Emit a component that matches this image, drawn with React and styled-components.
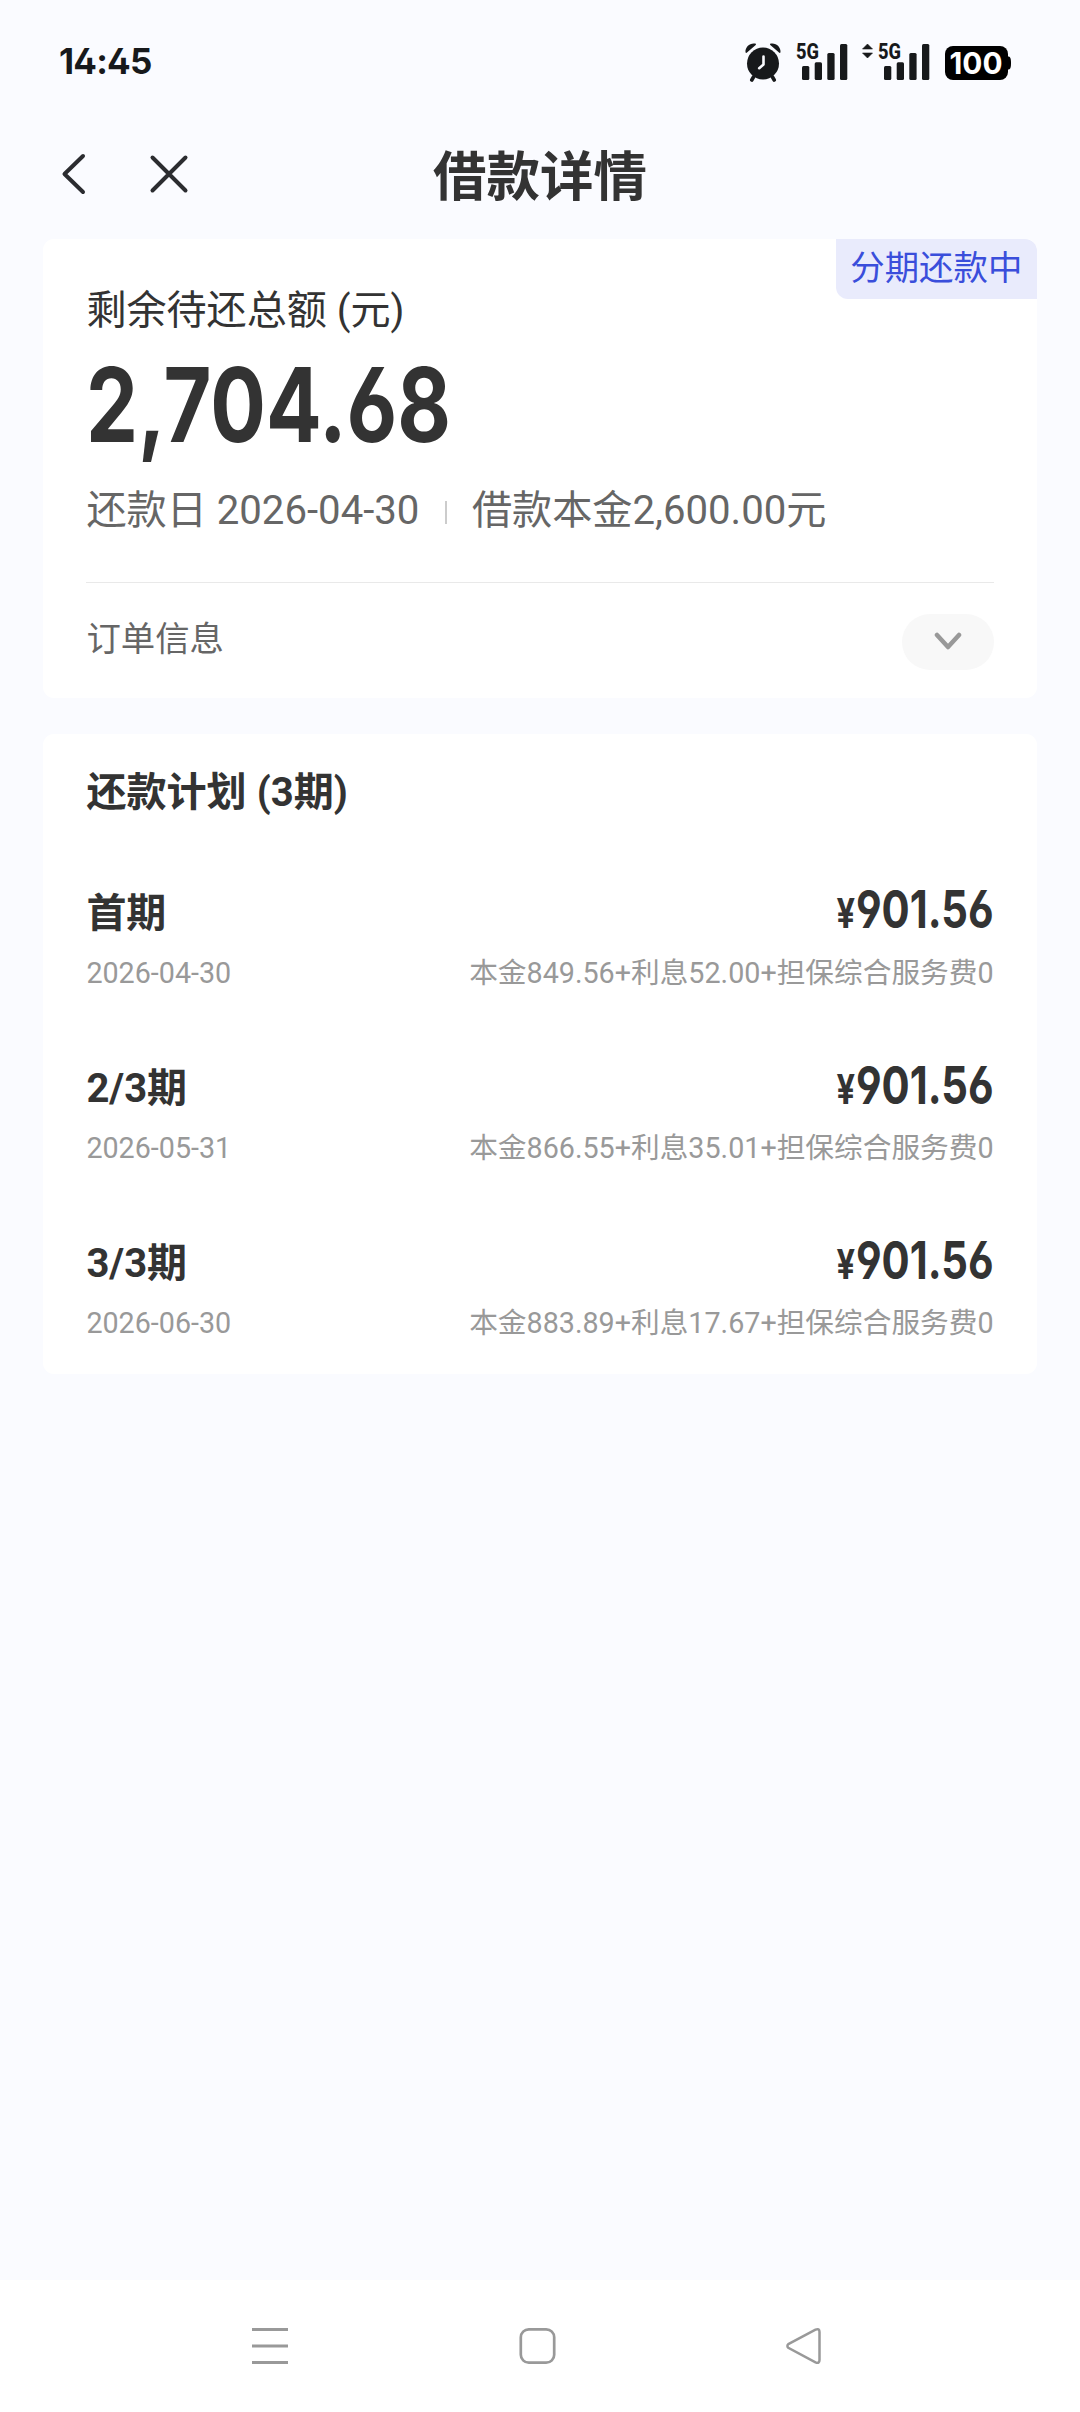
import styled, { createGlobalStyle } from 'styled-components'

const GlobalStyle = createGlobalStyle`
  * {
    box-sizing: border-box;
  }
  body {
    margin: 0;
    background-color: #fafbff;
    font-family: Roboto, 'Noto Sans CJK SC', sans-serif;
    color: #333;
  }
`

const Screen = styled.div`
  display: flex;
  flex-direction: column;
  width: 1080px;
  height: 2412px;
`

const StatusBar = styled.div`
  display: flex;
  align-items: flex-start;
  height: 110px;
  padding: 41px 68px 0 59px;
  color: #17191b;
`

const Clock = styled.div`
  flex: 1;
  font-family: Inter, sans-serif;
  font-feature-settings: 'cv02';
  font-size: 35px;
  font-weight: 650;
  line-height: 41px;
  letter-spacing: -0.8px;
`

const StatusIcons = styled.div`
  display: flex;
  gap: 14px;
  padding-top: 1px;

  svg {
    display: block;
    overflow: visible;
  }
`

const NavBar = styled.div`
  display: grid;
  grid-template-columns: 1fr auto 1fr;
  align-items: center;
  height: 128.7px;
  padding: 0 43px;
`

const NavButtons = styled.div`
  display: flex;
  gap: 42px;
  padding-left: 10px;

  svg {
    display: block;
  }
`

const PageTitle = styled.h1`
  margin: 0;
  padding-top: 7px;
  font-size: 53.5px;
  font-weight: 700;
  line-height: 60px;
`

const Content = styled.main`
  flex: 1;
  display: flex;
  flex-direction: column;
  gap: 36.3px;
  padding: 0 43.2px;
`

const Card = styled.section`
  position: relative;
  padding: 0 43.2px;
  height: ${props => props.$height}px;
  background-color: #fff;
  border-radius: 11px;
`

const StatusBadge = styled.div`
  position: absolute;
  top: 0;
  right: 0;
  width: 201px;
  height: 60px;
  font-size: 34.4px;
  line-height: 59.5px;
  text-align: center;
  color: #3a4edb;
  background-color: #e9ebfc;
  border-radius: 0 12px 0 12px;
`

const Label = styled.div`
  padding-top: 44px;
  font-size: 40.1px;
  line-height: 56px;
`

const Total = styled.div`
  margin-top: 16px;
  font-family: Inter, sans-serif;
  font-feature-settings: 'cv03', 'cv04';
  font-size: 103.5px;
  font-weight: 700;
  line-height: 100px;
  white-space: nowrap;
  transform: scaleX(0.798);
  transform-origin: left;
`

const Summary = styled.div`
  display: flex;
  align-items: center;
  margin-top: 28px;
  font-size: 40.15px;
  line-height: 56px;
  color: #666;
`

const Separator = styled.span`
  width: 1.5px;
  height: 23px;
  margin: 4px 25px 0 26px;
  background-color: #ccc;
`

const OrderRow = styled.div`
  display: flex;
  justify-content: space-between;
  margin-top: 43.2px;
  padding-top: 31.5px;
  border-top: 1px solid #e9e9e9;
  font-size: 34.4px;
  line-height: 51px;
  color: #666;
`

const ExpandButton = styled.button`
  display: flex;
  align-items: center;
  justify-content: center;
  width: 92px;
  height: 56px;
  padding: 0;
  border: none;
  border-radius: 28px;
  background-color: #f8f8f8;
`

const PlanTitle = styled.h2`
  margin: 0;
  padding-top: 38.7px;
  font-size: 40.1px;
  font-weight: 700;
  line-height: 40px;
`

const PlanList = styled.div`
  padding-top: 71.8px;
`

const PlanItem = styled.div`
  height: 175.2px;
`

const ItemRow = styled.div`
  display: flex;
  justify-content: space-between;
`

const Period = styled.div`
  padding-top: 1.5px;
  font-size: 40px;
  font-weight: 700;
  line-height: 56px;
`

const Amount = styled.div`
  font-family: Inter, sans-serif;
  font-feature-settings: 'cv03', 'cv04';
  font-size: 52.5px;
  font-weight: 700;
  line-height: 51px;
  transform: scaleX(0.795);
  transform-origin: right;
`

const Currency = styled.span`
  margin-right: 1px;
  font-size: 41px;
`

const Note = styled.div`
  padding-top: 13px;
  font-size: 28.7px;
  line-height: 36px;
  color: #999;
`

const SystemBar = styled.nav`
  display: flex;
  align-items: center;
  justify-content: space-between;
  height: 132px;
  padding: 0 258px 0 251px;
  background-color: #fff;
`

const AlarmIcon = () => (
  <svg width='38' height='40' viewBox='0 0 38 40' fill='#17191b'>
    <circle cx='19' cy='21.5' r='16' />
    <path d='M1.5 10.2C1 5 6 .6 11.2 1.6c.8.2 1 .8.5 1.3L3 10.6c-.6.5-1.3.3-1.5-.4z' />
    <path d='M36.5 10.2C37 5 32 .6 26.8 1.6c-.8.2-1 .8-.5 1.3l8.7 7.7c.6.5 1.3.3 1.5-.4z' />
    <path d='M9.5 35l-1.7 3M28.5 35l1.7 3' stroke='#17191b' strokeWidth='3.6' strokeLinecap='round' />
    <path d='M19.5 14.5v8l-4.3 3.7' fill='none' stroke='#fafbff' strokeWidth='2.6' strokeLinecap='round' strokeLinejoin='round' />
  </svg>
)

const SignalIcon = ({ arrows }) => (
  <svg width={arrows ? 68 : 53} height='40' viewBox={arrows ? '-15 0 68 40' : '0 0 53 40'} fill='#17191b'>
    {arrows && <path d='M-10.5 2l5 5h-10zM-10.5 16l5-5h-10z' stroke='#17191b' strokeWidth='.6' strokeLinejoin='round' />}
    <text x='0' y='17' fontSize='21.5' fontWeight='800' textLength='23' lengthAdjust='spacingAndGlyphs'>5G</text>
    <rect x='6' y='24' width='7.3' height='14' rx='1.5' />
    <rect x='18.7' y='20.3' width='7.3' height='17.7' rx='1.5' />
    <rect x='31.3' y='11' width='7.3' height='27' rx='1.5' />
    <rect x='44' y='2' width='7.3' height='36' rx='1.5' />
  </svg>
)

const BatteryIcon = () => (
  <svg width='67' height='40' viewBox='0 0 67 40'>
    <rect x='0' y='4' width='63' height='34' rx='8' fill='#000' />
    <path d='M63 14.5c2.2 0 3 1.5 3 6.5s-.8 6.5-3 6.5z' fill='#000' />
    <text x='31' y='32' fontSize='30.5' fontFamily='Inter, sans-serif' fontWeight='650' fill='#fff' textAnchor='middle' textLength='53' lengthAdjust='spacingAndGlyphs'>100</text>
  </svg>
)

const plan = [
  { period: '首期', date: '2026-04-30', note: '本金849.56+利息52.00+担保综合服务费0' },
  { period: '2/3期', date: '2026-05-31', note: '本金866.55+利息35.01+担保综合服务费0' },
  { period: '3/3期', date: '2026-06-30', note: '本金883.89+利息17.67+担保综合服务费0' }
]

const App = () => (
  <Screen>
    <GlobalStyle />
    <StatusBar>
      <Clock>14:45</Clock>
      <StatusIcons>
        <AlarmIcon />
        <SignalIcon />
        <SignalIcon arrows />
        <BatteryIcon />
      </StatusIcons>
    </StatusBar>

    <NavBar>
      <NavButtons>
        <svg width='44' height='44' viewBox='0 0 44 44' fill='none' stroke='#2b2c30' strokeWidth='4' strokeLinecap='round' strokeLinejoin='round'>
          <path d='M30 4L11.5 22L30 40' />
        </svg>
        <svg width='60' height='44' viewBox='0 0 60 44' fill='none' stroke='#2b2c30' strokeWidth='4' strokeLinecap='round'>
          <path d='M13.5 5.5l33 33M46.5 5.5l-33 33' />
        </svg>
      </NavButtons>
      <PageTitle>借款详情</PageTitle>
    </NavBar>

    <Content>
      <Card $height={459}>
        <StatusBadge>分期还款中</StatusBadge>
        <Label>剩余待还总额 (元)</Label>
        <Total>2,704.68</Total>
        <Summary>
          <span>还款日 2026-04-30</span>
          <Separator />
          <span>借款本金2,600.00元</span>
        </Summary>
        <OrderRow>
          <span>订单信息</span>
          <ExpandButton>
            <svg width='30' height='20' viewBox='0 0 30 20' fill='none' stroke='#999' strokeWidth='4.5' strokeLinecap='round' strokeLinejoin='round'>
              <path d='M4 3l11 12L26 3' />
            </svg>
          </ExpandButton>
        </OrderRow>
      </Card>

      <Card $height={640.3}>
        <PlanTitle>还款计划 (3期)</PlanTitle>
        <PlanList>
          {plan.map(item => (
            <PlanItem key={item.date}>
              <ItemRow>
                <Period>{item.period}</Period>
                <Amount><Currency>¥</Currency>901.56</Amount>
              </ItemRow>
              <ItemRow>
                <Note>{item.date}</Note>
                <Note>{item.note}</Note>
              </ItemRow>
            </PlanItem>
          ))}
        </PlanList>
      </Card>
    </Content>

    <SystemBar>
      <svg width='38' height='38' viewBox='0 0 38 38' stroke='#999' strokeWidth='3'>
        <path d='M1 2.5h36M1 19h36M1 35.5h36' />
      </svg>
      <svg width='38' height='38' viewBox='0 0 38 38' fill='none' stroke='#999' strokeWidth='2.7'>
        <rect x='2.8' y='2.3' width='33.4' height='33.4' rx='8' />
      </svg>
      <svg width='37' height='38' viewBox='0 0 37 38' fill='none' stroke='#999' strokeWidth='2.5'>
        <path d='M3.3 17.2L30.5 2.6Q34.5 1 34.5 5V33Q34.5 37 30.5 35.4L3.3 20.8Q1.5 19 3.3 17.2Z' />
      </svg>
    </SystemBar>
  </Screen>
)

export default App
